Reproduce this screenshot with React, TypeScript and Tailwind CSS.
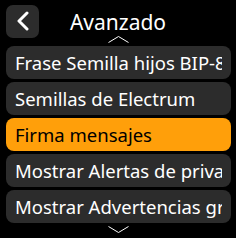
import React from 'react';

const items = [
  'Frase Semilla hijos BIP-85',
  'Semillas de Electrum',
  'Firma mensajes',
  'Mostrar Alertas de privacidad',
  'Mostrar Advertencias graves',
];

const App: React.FC = () => {
  const selected = 2;
  return (
    <div
      className="w-[236px] h-[238px] bg-black text-white overflow-hidden flex flex-col"
      style={{ fontFamily: '"Noto Sans", sans-serif' }}
    >
      <div className="h-[36px] flex items-center pl-[6px] pt-[6px] relative">
        <button className="w-[33px] h-[33px] rounded-[7px] bg-[#2c2c2c] flex items-center justify-center">
          <svg width="14" height="20" viewBox="0 0 14 20" fill="none">
            <path d="M11 2 L3 10 L11 18" stroke="white" strokeWidth="3" strokeLinecap="round" strokeLinejoin="round" />
          </svg>
        </button>
        <h1 className="absolute left-0 right-0 top-[8px] text-center text-[21px] leading-[28px] pointer-events-none">
          Avanzado
        </h1>
      </div>
      <div className="h-[10px] flex justify-center items-start">
        <svg width="21" height="7" viewBox="0 0 21 7">
          <path d="M0.5 6.5 L10.5 0.5 L20.5 6.5" stroke="white" strokeWidth="1" fill="none" />
        </svg>
      </div>
      <div className="flex flex-col gap-[3px] px-[6px] pr-[5px]">
        {items.map((t, i) => (
          <div
            key={t}
            className={`h-[33px] rounded-[8px] px-[9px] flex items-center text-[18.5px] ${
              i === selected ? 'bg-[#ff9f0a] text-black' : 'bg-[#2c2c2c] text-white'
            }`}
          >
            <span className="block overflow-hidden whitespace-nowrap">{t}</span>
          </div>
        ))}
      </div>
      <div className="flex justify-center pt-[3px]">
        <svg width="21" height="7" viewBox="0 0 21 7">
          <path d="M0.5 0.5 L10.5 6.5 L20.5 0.5" stroke="white" strokeWidth="1" fill="none" />
        </svg>
      </div>
    </div>
  );
};

export default App;
